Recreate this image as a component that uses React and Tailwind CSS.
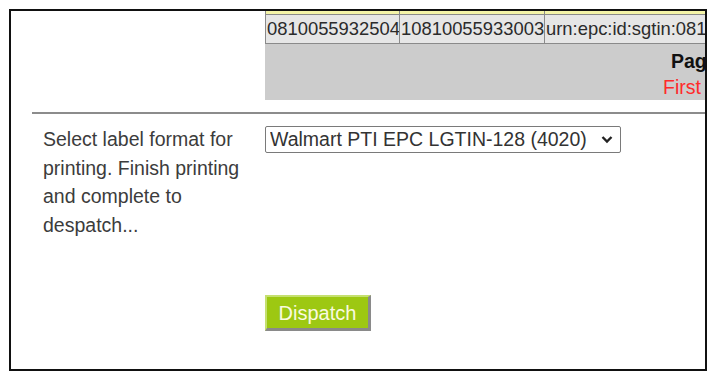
import React from "react";

export default function App() {
  const font = { fontFamily: '"Liberation Sans", Arial, sans-serif' };
  return (
    <div className="w-[716px] h-[378px] bg-white overflow-hidden pt-[9px] pl-[9px]" style={font}>
      <div className="w-[698px] h-[362px] border-2 border-[#111] overflow-hidden flex flex-col">
        {/* table fragment */}
        <div className="ml-[254px] w-[700px] shrink-0">
          <div className="flex h-[3px]">
            <div className="w-[135px] h-full bg-[#f4f4a8] border-l border-r border-[#8a8a8a]"></div>
            <div className="w-[145px] h-full bg-[#f4f4a8] border-r border-[#8a8a8a]"></div>
            <div className="w-[420px] h-full bg-[#f4f4a8]"></div>
          </div>
          <div className="flex h-[30px] border-t border-b border-[#8a8a8a] bg-[#e6e6e6] text-[18.4px] text-[#2b2b2b] leading-[27px]">
            <div className="w-[135px] border-l border-r border-[#8a8a8a] pl-px overflow-hidden whitespace-nowrap">0810055932504</div>
            <div className="w-[145px] border-r border-[#8a8a8a] pl-px overflow-hidden whitespace-nowrap">10810055933003</div>
            <div className="w-[420px] pl-px whitespace-nowrap">urn:epc:id:sgtin:0810055</div>
          </div>
          <div className="h-[56px] bg-[#cccccc] pl-[398px] pt-[2px] text-[19.5px] leading-[30px]">
            <div className="font-bold text-[#111] pl-[8px] whitespace-nowrap">Page 1 of 1</div>
            <div className="text-[#ff2a2a] whitespace-nowrap leading-[22px]">First Prev</div>
          </div>
        </div>
        {/* rule */}
        <div className="ml-[21px] mt-[12px] h-[2px] bg-[#8c8c8c] shrink-0"></div>
        {/* form row */}
        <div className="flex mt-[11px]">
          <div className="w-[254px] pl-[32px] text-[19.5px] leading-[28.5px] text-[#3c3c3c] shrink-0 whitespace-nowrap">
            Select label format for<br />printing. Finish printing<br />and complete to<br />despatch...
          </div>
          <div className="flex flex-col items-start pt-px">
            <div className="relative">
              <select
                className="appearance-none w-[356px] h-[27px] border border-[#7a7a7a] rounded-[2px] bg-white text-[19.5px] text-[#333] pl-[4px] leading-[25px] outline-none"
                style={font}
                defaultValue="a"
              >
                <option value="a">Walmart PTI EPC LGTIN-128 (4020)</option>
              </select>
              <svg className="absolute right-[8px] top-[9px] pointer-events-none" width="12" height="9" viewBox="0 0 12 9">
                <path d="M1.5 2 L6 6.5 L10.5 2" fill="none" stroke="#222" strokeWidth="2.4" />
              </svg>
            </div>
            <button
              className="mt-[142px] w-[106px] h-[36px] bg-[#9dc812] text-[#fafae0] text-[20px] leading-[30px] border-t-2 border-l-2 border-[#c5e070] border-b-[3px] border-r-[3px] border-b-[#8a8a8a] border-r-[#8a8a8a]"
              style={font}
            >
              Dispatch
            </button>
          </div>
        </div>
      </div>
    </div>
  );
}
